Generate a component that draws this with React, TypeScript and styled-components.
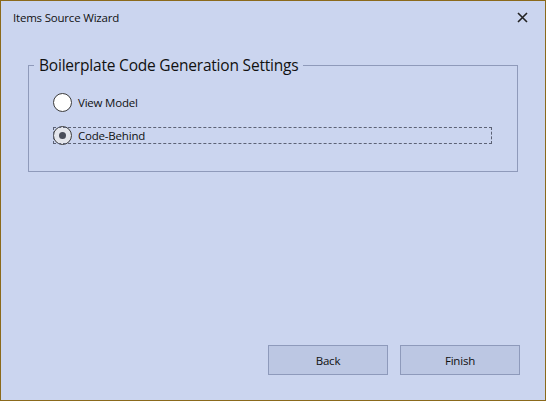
import React, { useState } from "react";
import styled, { createGlobalStyle } from "styled-components";

const GlobalStyle = createGlobalStyle`
  html, body { margin: 0; padding: 0; }
  body { font-family: "Open Sans", "Noto Sans", sans-serif; }
  * { box-sizing: border-box; }
`;

const Window = styled.div`
  width: 546px;
  height: 401px;
  border: 1px solid #8b6a1b;
  background: #cbd5ef;
  display: flex;
  flex-direction: column;
  color: #1a1a1a;
`;

const TitleBar = styled.div`
  height: 33px;
  display: flex;
  align-items: center;
  justify-content: space-between;
  padding: 0 17px 0 12px;
`;

const TitleText = styled.span`
  font-size: 11.5px;
  letter-spacing: -0.2px;
  color: #111;
`;

const CloseButton = styled.button`
  width: 12px;
  height: 12px;
  padding: 0;
  border: 0;
  background: transparent;
  display: flex;
  align-items: center;
  justify-content: center;
`;

const Body = styled.div`
  flex: 1;
  display: flex;
  flex-direction: column;
  padding: 21px 27px 0 27px;
`;

const GroupBox = styled.fieldset`
  margin: 0;
  border: 1px solid #8f9aba;
  padding: 0;
  min-width: 0;
`;

const Legend = styled.legend`
  font-size: 15.5px;
  letter-spacing: -0.2px;
  padding: 0 5px;
  margin-left: 5px;
  color: #111;
  line-height: 21px;
`;

const OptionList = styled.div`
  display: flex;
  flex-direction: column;
  gap: 15px;
  padding: 17px 25px 27px 24px;
`;

const Option = styled.label<{ $focused?: boolean }>`
  display: flex;
  align-items: center;
  gap: 6px;
  height: ${(p) => (p.$focused ? "17px" : "19px")};
  outline: ${(p) => (p.$focused ? "1px dashed #5c6275" : "none")};
  outline-offset: -1px;
  font-size: 11.5px;
  letter-spacing: -0.2px;
  color: #111;
  cursor: default;
`;

const RadioCircle = styled.span<{ $checked?: boolean }>`
  width: 19px;
  height: 19px;
  border-radius: 50%;
  border: 1px solid #3c3c3c;
  background: ${(p) => (p.$checked ? "#e4e6ec" : "#ffffff")};
  display: flex;
  align-items: center;
  justify-content: center;
  flex: none;
  &::after {
    content: "";
    width: 7px;
    height: 7px;
    border-radius: 50%;
    background: #4a4e5a;
    display: ${(p) => (p.$checked ? "block" : "none")};
  }
`;

const Spacer = styled.div`
  flex: 1;
`;

const Footer = styled.div`
  display: flex;
  justify-content: flex-end;
  gap: 12px;
  padding: 0 25px 25px 0;
`;

const Button = styled.button`
  width: 120px;
  height: 30px;
  background: #bcc7e3;
  border: 1px solid #8e9abb;
  font-family: "Open Sans", "Noto Sans", sans-serif;
  font-size: 11.5px;
  letter-spacing: -0.2px;
  color: #111;
  padding: 0;
`;

export default function App() {
  const [value, setValue] = useState("code");
  return (
    <>
      <GlobalStyle />
      <Window>
        <TitleBar>
          <TitleText>Items Source Wizard</TitleText>
          <CloseButton aria-label="Close">
            <svg width="11" height="11" viewBox="0 0 11 11">
              <path d="M1 1 L10 10 M10 1 L1 10" stroke="#222" strokeWidth="1.6" />
            </svg>
          </CloseButton>
        </TitleBar>
        <Body>
          <GroupBox>
            <Legend>Boilerplate Code Generation Settings</Legend>
            <OptionList>
              <Option onClick={() => setValue("vm")} $focused={value === "vm"}>
                <RadioCircle $checked={value === "vm"} />
                View Model
              </Option>
              <Option onClick={() => setValue("code")} $focused={value === "code"}>
                <RadioCircle $checked={value === "code"} />
                Code-Behind
              </Option>
            </OptionList>
          </GroupBox>
          <Spacer />
        </Body>
        <Footer>
          <Button>Back</Button>
          <Button>Finish</Button>
        </Footer>
      </Window>
    </>
  );
}
